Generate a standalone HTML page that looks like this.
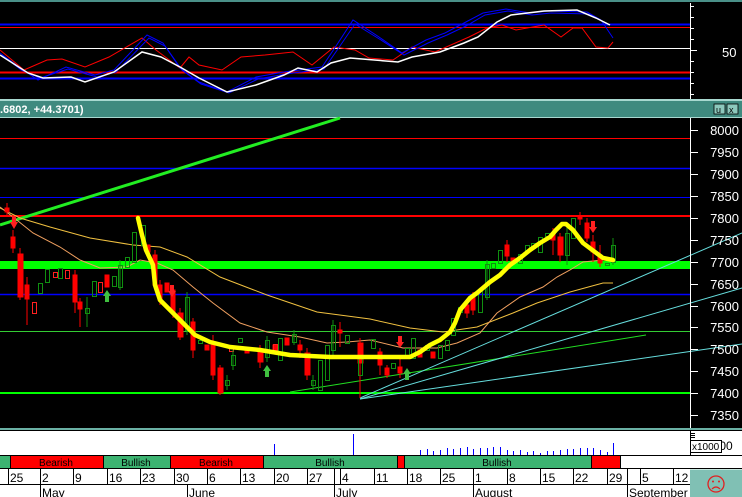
<!DOCTYPE html>
<html><head><meta charset="utf-8"><style>
html,body{margin:0;padding:0;background:#000;width:742px;height:497px;overflow:hidden}
svg{display:block;font-family:"Liberation Sans",sans-serif}
</style></head><body>
<svg width="742" height="497" viewBox="0 0 742 497" xmlns="http://www.w3.org/2000/svg">
<rect width="742" height="497" fill="#000"/>
<!-- top panel -->
<rect x="0" y="0" width="742" height="2" fill="#4a9088"/>
<g stroke-width="1" fill="none">
<line x1="0" y1="24.5" x2="691" y2="24.5" stroke="#0000ff" stroke-width="2"/>
<line x1="0" y1="27.5" x2="691" y2="27.5" stroke="#ff0000"/>
<line x1="0" y1="48.5" x2="691" y2="48.5" stroke="#fff"/>
<line x1="0" y1="72.5" x2="691" y2="72.5" stroke="#ff0000" stroke-width="2"/>
<line x1="0" y1="78.5" x2="691" y2="78.5" stroke="#0000ff" stroke-width="2"/>
<polyline stroke="#ff0000" points="0,50 24,70 47,60 62,59 85,67 109,57 142,38 156,50 180,68 189,57 199,65 222,70 241,57 265,55 293,52 312,65 334,47 355,50 369,58 393,60 412,47 435,52 469,37 487,28 502,25 516,30 544,25 561,37 573,28 582,28 596,47 608,48 613,42"/>
<polyline stroke="#0000ff" points="0,53 19,67 38,80 66,67 95,75 114,70 147,35 163,43 180,68 199,82 227,92 256,77 284,72 322,67 338,43 353,20 379,37 402,53 426,40 445,33 464,23 483,13 506,9 530,13 549,11 587,12 601,20 613,38"/>
<polyline stroke="#0000ff" points="2,55 21,70 40,78 68,69 97,77 116,72 149,38 165,46 182,70 201,84 229,93 258,79 286,74 324,69 340,46 355,24 381,40 404,55 428,43 447,35 466,26 485,15 508,11 532,15 551,13 589,14 603,22"/>
<polyline stroke="#fff" stroke-width="1.5" points="0,55 28,73 43,78 71,77 85,82 114,72 142,52 161,57 180,67 199,78 227,92 256,85 284,75 298,68 317,72 331,63 350,58 398,62 412,57 440,52 464,43 478,37 497,22 511,15 544,11 577,10 596,18 610,25"/>
</g>
<line x1="690.5" y1="3" x2="690.5" y2="99" stroke="#fff"/>
<g stroke="#fff"><line x1="690" y1="6.5" x2="694" y2="6.5"/><line x1="690" y1="17.5" x2="694" y2="17.5"/><line x1="690" y1="28.5" x2="694" y2="28.5"/><line x1="690" y1="39.5" x2="694" y2="39.5"/><line x1="690" y1="50.5" x2="697" y2="50.5"/><line x1="690" y1="61.5" x2="694" y2="61.5"/><line x1="690" y1="72.5" x2="694" y2="72.5"/><line x1="690" y1="83.5" x2="694" y2="83.5"/><line x1="690" y1="94.5" x2="694" y2="94.5"/></g>
<text x="722" y="57" fill="#fff" font-size="13">50</text>
<!-- title bar -->
<rect x="0" y="99" width="742" height="2" fill="#a8d8d0"/>
<rect x="0" y="101" width="742" height="16" fill="#3f8a7f"/>
<rect x="0" y="117" width="742" height="1" fill="#a8d8d0"/>
<text x="0" y="113" fill="#fff" font-size="11" font-weight="bold">.6802, +44.3701)</text>
<rect x="714" y="104" width="11" height="10" fill="#8cc8bc" stroke="#000" stroke-width="0.8"/>
<text x="716" y="113" font-size="9" fill="#000">u</text>
<rect x="727" y="104" width="11" height="10" fill="#8cc8bc" stroke="#000" stroke-width="0.8"/>
<text x="729" y="113" font-size="9" fill="#000">x</text>
<!-- main chart lines -->
<g>
<line x1="0" y1="138.5" x2="690" y2="138.5" stroke="#ff0000"/>
<line x1="0" y1="168.5" x2="690" y2="168.5" stroke="#0000ff" stroke-width="1.5"/>
<line x1="0" y1="197.5" x2="690" y2="197.5" stroke="#0000ff"/>
<line x1="0" y1="216" x2="690" y2="216" stroke="#ff0000" stroke-width="2"/>
<rect x="0" y="261" width="690" height="8" fill="#00ff00"/>
<line x1="0" y1="294.5" x2="690" y2="294.5" stroke="#0000ff" stroke-width="1.5"/>
<line x1="0" y1="331.5" x2="690" y2="331.5" stroke="#33cc33"/>
<line x1="0" y1="393" x2="690" y2="393" stroke="#00ff00" stroke-width="2"/>
<line x1="0" y1="225" x2="340" y2="118" stroke="#22ee22" stroke-width="3"/>
<line x1="290" y1="392" x2="646" y2="335" stroke="#22dd22"/>
<line x1="360" y1="398" x2="742" y2="233" stroke="#66dddd"/>
<line x1="360" y1="399" x2="742" y2="288" stroke="#66dddd"/>
<line x1="360" y1="399" x2="742" y2="344" stroke="#66dddd"/>
</g>
<polyline fill="none" stroke="#f0c040" stroke-width="1" points="0,208 20,218 50,227 90,238 133,245 160,247 187,257 220,277 267,295 317,312 370,319 410,328 443,332 477,327 513,313 537,303 570,292 603,283 613,283"/>
<polyline fill="none" stroke="#f0a060" stroke-width="1" points="0,207 13,217 33,233 60,247 80,260 100,268 127,267 140,260 157,263 173,270 193,287 213,303 240,323 267,332 300,337 327,343 347,342 370,340 403,348 437,348 457,343 480,333 497,313 520,297 543,287 557,277 570,270 583,262 603,260"/>
<!-- candles -->
<g stroke-width="1">
<g fill="#ff0000" stroke="#ff0000">
<line x1="7" y1="203" x2="7" y2="215"/><rect x="5" y="208" width="4" height="4"/>
<line x1="13" y1="230" x2="13" y2="253"/><rect x="11" y="237" width="4" height="11"/>
<line x1="20" y1="248" x2="20" y2="300"/><rect x="18" y="254" width="5" height="43"/>
<line x1="27" y1="277" x2="27" y2="325"/><rect x="25" y="285" width="4" height="14"/>
<line x1="75" y1="270" x2="75" y2="313"/><rect x="73" y="275" width="4" height="27"/>
<line x1="80" y1="298" x2="80" y2="327"/><rect x="78" y="302" width="4" height="7"/>
<rect x="105" y="275" width="4" height="12"/>
<rect x="146" y="245" width="4" height="7"/>
<line x1="155" y1="250" x2="155" y2="290"/><rect x="153" y="255" width="4" height="30"/>
<line x1="160" y1="280" x2="160" y2="305"/><rect x="158" y="285" width="4" height="15"/>
<rect x="165" y="283" width="4" height="9"/>
<line x1="173" y1="285" x2="173" y2="318"/><rect x="171" y="290" width="4" height="23"/>
<line x1="180" y1="308" x2="180" y2="340"/><rect x="178" y="313" width="5" height="24"/>
<line x1="193" y1="318" x2="193" y2="358"/><rect x="191" y="322" width="4" height="28"/>
<rect x="205" y="345" width="4" height="5"/>
<line x1="213" y1="335" x2="213" y2="380"/><rect x="211" y="343" width="4" height="32"/>
<line x1="220" y1="365" x2="220" y2="395"/><rect x="218" y="368" width="5" height="25"/>
<rect x="245" y="350" width="4" height="3"/>
<line x1="260" y1="345" x2="260" y2="368"/><rect x="258" y="352" width="5" height="10"/>
<rect x="273" y="345" width="4" height="7"/>
<rect x="285" y="338" width="4" height="7"/>
<line x1="300" y1="340" x2="300" y2="358"/><rect x="298" y="345" width="4" height="5"/>
<line x1="307" y1="348" x2="307" y2="380"/><rect x="305" y="353" width="5" height="22"/>
<line x1="340" y1="322" x2="340" y2="347"/><rect x="338" y="330" width="4" height="3"/>
<line x1="360" y1="338" x2="360" y2="398"/><rect x="358" y="343" width="5" height="20"/>
<line x1="380" y1="348" x2="380" y2="375"/><rect x="378" y="352" width="4" height="13"/>
<line x1="387" y1="365" x2="387" y2="378"/><rect x="385" y="368" width="4" height="7"/>
<line x1="400" y1="355" x2="400" y2="378"/><rect x="398" y="367" width="4" height="6"/>
<rect x="418" y="350" width="4" height="7"/>
<rect x="431" y="352" width="4" height="6"/>
<line x1="467" y1="300" x2="467" y2="318"/><rect x="465" y="305" width="4" height="8"/>
<line x1="473" y1="292" x2="473" y2="315"/><rect x="471" y="297" width="4" height="13"/>
<line x1="507" y1="240" x2="507" y2="262"/><rect x="505" y="245" width="4" height="11"/>
<rect x="511" y="258" width="4" height="4"/>
<line x1="553" y1="228" x2="553" y2="255"/><rect x="551" y="233" width="4" height="7"/>
<line x1="560" y1="233" x2="560" y2="262"/><rect x="558" y="237" width="5" height="18"/>
<line x1="580" y1="212" x2="580" y2="225"/><rect x="578" y="216" width="4" height="3"/>
<line x1="587" y1="218" x2="587" y2="242"/><rect x="585" y="223" width="4" height="15"/>
<line x1="593" y1="235" x2="593" y2="262"/><rect x="591" y="242" width="4" height="10"/>
<line x1="600" y1="245" x2="600" y2="267"/><rect x="598" y="255" width="4" height="8"/>
</g>
<g fill="none" stroke="#ff2020">
<rect x="32.5" y="302.5" width="4" height="11"/><rect x="53.5" y="272.5" width="4" height="5"/><rect x="98.5" y="282.5" width="4" height="10"/><rect x="65.5" y="270.5" width="4" height="8"/><rect x="273.5" y="344.5" width="4" height="6"/><rect x="229.5" y="347.5" width="4" height="4"/>
</g>
<g fill="none" stroke="#109010">
<rect x="38.5" y="283.5" width="4" height="10"/><rect x="45.5" y="269.5" width="4" height="13"/><rect x="58.5" y="268.5" width="4" height="10"/>
<line x1="87" y1="297" x2="87" y2="327"/><rect x="85.5" y="308.5" width="4" height="5"/>
<rect x="92.5" y="281.5" width="4" height="15"/><rect x="112.5" y="276.5" width="4" height="10"/>
<line x1="120" y1="260" x2="120" y2="290"/><rect x="118.5" y="265.5" width="4" height="22"/>
<rect x="125.5" y="257.5" width="4" height="10"/><rect x="132.5" y="232.5" width="4" height="30"/><rect x="141.5" y="225.5" width="4" height="20"/>
<line x1="187" y1="292" x2="187" y2="335"/><rect x="185.5" y="297.5" width="4" height="33"/>
<rect x="198.5" y="340.5" width="4" height="3"/>
<line x1="227" y1="375" x2="227" y2="390"/><rect x="225.5" y="380.5" width="4" height="5"/>
<line x1="233" y1="350" x2="233" y2="370"/><rect x="231.5" y="355.5" width="4" height="10"/>
<rect x="238.5" y="338.5" width="4" height="4"/>
<line x1="267" y1="336" x2="267" y2="362"/><rect x="265.5" y="340.5" width="4" height="17"/>
<rect x="278.5" y="338.5" width="4" height="22"/>
<line x1="294" y1="330" x2="294" y2="345"/><rect x="292.5" y="334.5" width="4" height="8"/>
<line x1="313" y1="375" x2="313" y2="390"/><rect x="311.5" y="380.5" width="4" height="5"/>
<rect x="318.5" y="360.5" width="4" height="30"/><rect x="325.5" y="345.5" width="4" height="35"/>
<line x1="333" y1="320" x2="333" y2="355"/><rect x="331.5" y="325.5" width="4" height="25"/>
<rect x="345.5" y="335.5" width="4" height="8"/><rect x="358.5" y="357.5" width="4" height="18"/>
<rect x="371.5" y="339.5" width="4" height="9"/><rect x="391.5" y="363.5" width="4" height="5"/>
<rect x="405.5" y="348.5" width="4" height="9"/><rect x="411.5" y="338.5" width="4" height="20"/>
<rect x="425.5" y="345.5" width="4" height="5"/><rect x="438.5" y="345.5" width="4" height="13"/>
<rect x="445.5" y="340.5" width="4" height="10"/><rect x="451.5" y="318.5" width="4" height="17"/>
<rect x="458.5" y="307.5" width="4" height="5"/><rect x="478.5" y="290.5" width="4" height="22"/>
<line x1="487" y1="260" x2="487" y2="300"/><rect x="485.5" y="264.5" width="4" height="33"/>
<rect x="491.5" y="263.5" width="4" height="5"/><rect x="498.5" y="250.5" width="4" height="13"/>
<rect x="518.5" y="254.5" width="4" height="9"/><rect x="525.5" y="245.5" width="4" height="5"/>
<rect x="531.5" y="243.5" width="4" height="5"/><rect x="538.5" y="237.5" width="4" height="15"/>
<rect x="545.5" y="233.5" width="4" height="3"/>
<line x1="567" y1="225" x2="567" y2="265"/><rect x="565.5" y="233.5" width="4" height="22"/>
<rect x="571.5" y="218.5" width="4" height="20"/><rect x="605.5" y="263.5" width="4" height="2"/>
<line x1="613" y1="238" x2="613" y2="265"/><rect x="611.5" y="245.5" width="4" height="17"/>
</g>
<!-- arrows -->
<g fill="#ff2020"><polygon points="10,222 18,222 14,229"/><rect x="12" y="216" width="4" height="6"/>
<polygon points="168,291 176,291 172,297"/><rect x="170" y="285" width="4" height="6"/>
<polygon points="396,342 404,342 400,348"/><rect x="398" y="336" width="4" height="6"/>
<polygon points="589,227 597,227 593,233"/><rect x="591" y="221" width="4" height="6"/></g>
<g fill="#40c040"><polygon points="103,296 111,296 107,290"/><rect x="105" y="296" width="4" height="6"/>
<polygon points="263,371 271,371 267,365"/><rect x="265" y="371" width="4" height="6"/>
<polygon points="403,374 411,374 407,368"/><rect x="405" y="374" width="4" height="6"/></g>
</g>
<!-- yellow hand line -->
<polyline fill="none" stroke="#ffff00" stroke-width="4.5" stroke-linejoin="round" stroke-linecap="round" points="138,218 142,235 146,250 153,265 155,285 160,300 170,310 180,320 195,335 210,342 230,347 260,350 290,355 330,357 360,357 400,357 410,357 420,352 430,345 440,340 450,332 455,323 460,310 470,298 477,293 490,282 500,275 510,265 520,258 530,250 540,243 550,237 556,230 562,224 566,224 573,230 583,243 595,252 603,258 613,260"/>
<!-- right axis main -->
<line x1="690.5" y1="118" x2="690.5" y2="428" stroke="#fff"/>
<g stroke="#fff">
<line x1="690" y1="130.5" x2="698" y2="130.5"/><line x1="690" y1="152.5" x2="698" y2="152.5"/><line x1="690" y1="174.5" x2="698" y2="174.5"/><line x1="690" y1="196.5" x2="698" y2="196.5"/><line x1="690" y1="218.5" x2="698" y2="218.5"/><line x1="690" y1="240.5" x2="698" y2="240.5"/><line x1="690" y1="262.5" x2="698" y2="262.5"/><line x1="690" y1="284.5" x2="698" y2="284.5"/><line x1="690" y1="306.5" x2="698" y2="306.5"/><line x1="690" y1="327.5" x2="698" y2="327.5"/><line x1="690" y1="349.5" x2="698" y2="349.5"/><line x1="690" y1="371.5" x2="698" y2="371.5"/><line x1="690" y1="393.5" x2="698" y2="393.5"/><line x1="690" y1="415.5" x2="698" y2="415.5"/>
</g>
<g fill="#fff" font-size="13" text-anchor="end">
<text x="739" y="135">8000</text><text x="739" y="157">7950</text><text x="739" y="179">7900</text><text x="739" y="201">7850</text><text x="739" y="223">7800</text><text x="739" y="245">7750</text><text x="739" y="267">7700</text><text x="739" y="289">7650</text><text x="739" y="311">7600</text><text x="739" y="332">7550</text><text x="739" y="354">7500</text><text x="739" y="376">7450</text><text x="739" y="398">7400</text><text x="739" y="420">7350</text>
</g>
<!-- separator -->
<rect x="0" y="428" width="742" height="2" fill="#6ab0a4"/>
<rect x="0" y="430" width="742" height="1" fill="#000"/>
<!-- volume -->
<rect x="0" y="431" width="742" height="24" fill="#fff"/>
<g stroke="#0000ff">
<line x1="274.5" y1="444" x2="274.5" y2="455"/><line x1="353.5" y1="434" x2="353.5" y2="455"/>
<line x1="420.5" y1="450" x2="420.5" y2="455"/><line x1="427.5" y1="449" x2="427.5" y2="455"/><line x1="433.5" y1="451" x2="433.5" y2="455"/><line x1="440.5" y1="450" x2="440.5" y2="455"/><line x1="447.5" y1="448" x2="447.5" y2="455"/><line x1="453.5" y1="449" x2="453.5" y2="455"/><line x1="460.5" y1="448" x2="460.5" y2="455"/><line x1="467.5" y1="447" x2="467.5" y2="455"/><line x1="473.5" y1="449" x2="473.5" y2="455"/><line x1="480.5" y1="448" x2="480.5" y2="455"/><line x1="487.5" y1="448" x2="487.5" y2="455"/><line x1="493.5" y1="447" x2="493.5" y2="455"/><line x1="500.5" y1="447" x2="500.5" y2="455"/><line x1="507.5" y1="450" x2="507.5" y2="455"/><line x1="513.5" y1="451" x2="513.5" y2="455"/><line x1="520.5" y1="450" x2="520.5" y2="455"/><line x1="527.5" y1="452" x2="527.5" y2="455"/><line x1="533.5" y1="451" x2="533.5" y2="455"/><line x1="540.5" y1="453" x2="540.5" y2="455"/><line x1="547.5" y1="451" x2="547.5" y2="455"/><line x1="553.5" y1="451" x2="553.5" y2="455"/><line x1="560.5" y1="450" x2="560.5" y2="455"/><line x1="567.5" y1="449" x2="567.5" y2="455"/><line x1="573.5" y1="449" x2="573.5" y2="455"/><line x1="580.5" y1="448" x2="580.5" y2="455"/><line x1="587.5" y1="448" x2="587.5" y2="455"/><line x1="593.5" y1="448" x2="593.5" y2="455"/><line x1="600.5" y1="450" x2="600.5" y2="455"/><line x1="607.5" y1="452" x2="607.5" y2="455"/><line x1="613.5" y1="443" x2="613.5" y2="455"/>
</g>
<line x1="690.5" y1="431" x2="690.5" y2="455" stroke="#000"/>
<g stroke="#000"><line x1="690" y1="433.5" x2="695" y2="433.5"/><line x1="690" y1="435.5" x2="695" y2="435.5"/><line x1="690" y1="437.5" x2="695" y2="437.5"/></g>
<text x="706" y="450" font-size="12" fill="#000">1000</text>
<rect x="690.5" y="440.5" width="31" height="12" fill="#fff" stroke="#000"/>
<text x="692" y="450" font-size="10" fill="#000">x1000</text>
<line x1="0" y1="455.5" x2="742" y2="455.5" stroke="#000"/>
<!-- signal bar -->
<g>
<rect x="0" y="456" width="10" height="12" fill="#3cb371"/>
<rect x="10" y="456" width="93" height="12" fill="#ff0000"/>
<rect x="103" y="456" width="67" height="12" fill="#3cb371"/>
<rect x="170" y="456" width="93" height="12" fill="#ff0000"/>
<rect x="263" y="456" width="134" height="12" fill="#3cb371"/>
<rect x="397" y="456" width="7" height="12" fill="#ff0000"/>
<rect x="404" y="456" width="187" height="12" fill="#3cb371"/>
<rect x="591" y="456" width="29" height="12" fill="#ff0000"/>
<rect x="620" y="456" width="122" height="12" fill="#fff"/>
<g stroke="#000"><line x1="10.5" y1="456" x2="10.5" y2="468"/><line x1="103.5" y1="456" x2="103.5" y2="468"/><line x1="170.5" y1="456" x2="170.5" y2="468"/><line x1="263.5" y1="456" x2="263.5" y2="468"/><line x1="397.5" y1="456" x2="397.5" y2="468"/><line x1="404.5" y1="456" x2="404.5" y2="468"/><line x1="591.5" y1="456" x2="591.5" y2="468"/><line x1="620.5" y1="456" x2="620.5" y2="468"/></g>
<g font-size="10" fill="#000" text-anchor="middle"><text x="56" y="466">Bearish</text><text x="136" y="466">Bullish</text><text x="216" y="466">Bearish</text><text x="330" y="466">Bullish</text><text x="497" y="466">Bullish</text></g>
</g>
<line x1="0" y1="468.5" x2="742" y2="468.5" stroke="#000"/>
<!-- date rows -->
<rect x="0" y="469" width="690" height="28" fill="#fff"/>
<line x1="0" y1="484.5" x2="690" y2="484.5" stroke="#000"/>
<g stroke="#000">
<line x1="8.5" y1="469" x2="8.5" y2="484"/><line x1="40.5" y1="469" x2="40.5" y2="497"/><line x1="73.5" y1="469" x2="73.5" y2="484"/><line x1="107.5" y1="469" x2="107.5" y2="484"/><line x1="140.5" y1="469" x2="140.5" y2="484"/><line x1="174.5" y1="469" x2="174.5" y2="484"/><line x1="187.5" y1="485" x2="187.5" y2="497"/><line x1="207.5" y1="469" x2="207.5" y2="484"/><line x1="240.5" y1="469" x2="240.5" y2="484"/><line x1="274.5" y1="469" x2="274.5" y2="484"/><line x1="307.5" y1="469" x2="307.5" y2="484"/><line x1="334.5" y1="469" x2="334.5" y2="497"/><line x1="340.5" y1="469" x2="340.5" y2="484"/><line x1="374.5" y1="469" x2="374.5" y2="484"/><line x1="407.5" y1="469" x2="407.5" y2="484"/><line x1="440.5" y1="469" x2="440.5" y2="484"/><line x1="473.5" y1="469" x2="473.5" y2="497"/><line x1="507.5" y1="469" x2="507.5" y2="484"/><line x1="540.5" y1="469" x2="540.5" y2="484"/><line x1="573.5" y1="469" x2="573.5" y2="484"/><line x1="607.5" y1="469" x2="607.5" y2="484"/><line x1="627.5" y1="469" x2="627.5" y2="497"/><line x1="640.5" y1="469" x2="640.5" y2="484"/><line x1="673.5" y1="469" x2="673.5" y2="484"/>
</g>
<g font-size="12" fill="#000">
<text x="10" y="482">25</text><text x="42" y="482">2</text><text x="75" y="482">9</text><text x="109" y="482">16</text><text x="142" y="482">23</text><text x="176" y="482">30</text><text x="209" y="482">6</text><text x="242" y="482">13</text><text x="276" y="482">20</text><text x="309" y="482">27</text><text x="342" y="482">4</text><text x="376" y="482">11</text><text x="409" y="482">18</text><text x="442" y="482">25</text><text x="475" y="482">1</text><text x="509" y="482">8</text><text x="542" y="482">15</text><text x="575" y="482">22</text><text x="609" y="482">29</text><text x="642" y="482">5</text><text x="675" y="482">12</text>
<text x="42" y="497">May</text><text x="189" y="497">June</text><text x="336" y="497">July</text><text x="475" y="497">August</text><text x="629" y="497">September</text>
</g>
<!-- button -->
<rect x="690" y="469" width="52" height="28" fill="#80c0b4"/>
<line x1="690" y1="469.5" x2="742" y2="469.5" stroke="#c8e8e0"/>
<circle cx="716" cy="484" r="8" fill="none" stroke="#e02020" stroke-width="1.3"/>
<circle cx="713" cy="481.5" r="1" fill="#e02020"/><circle cx="719" cy="481.5" r="1" fill="#e02020"/>
<path d="M712 489 Q716 485 720 489" fill="none" stroke="#e02020" stroke-width="1.2"/>
</svg>
</body></html>
